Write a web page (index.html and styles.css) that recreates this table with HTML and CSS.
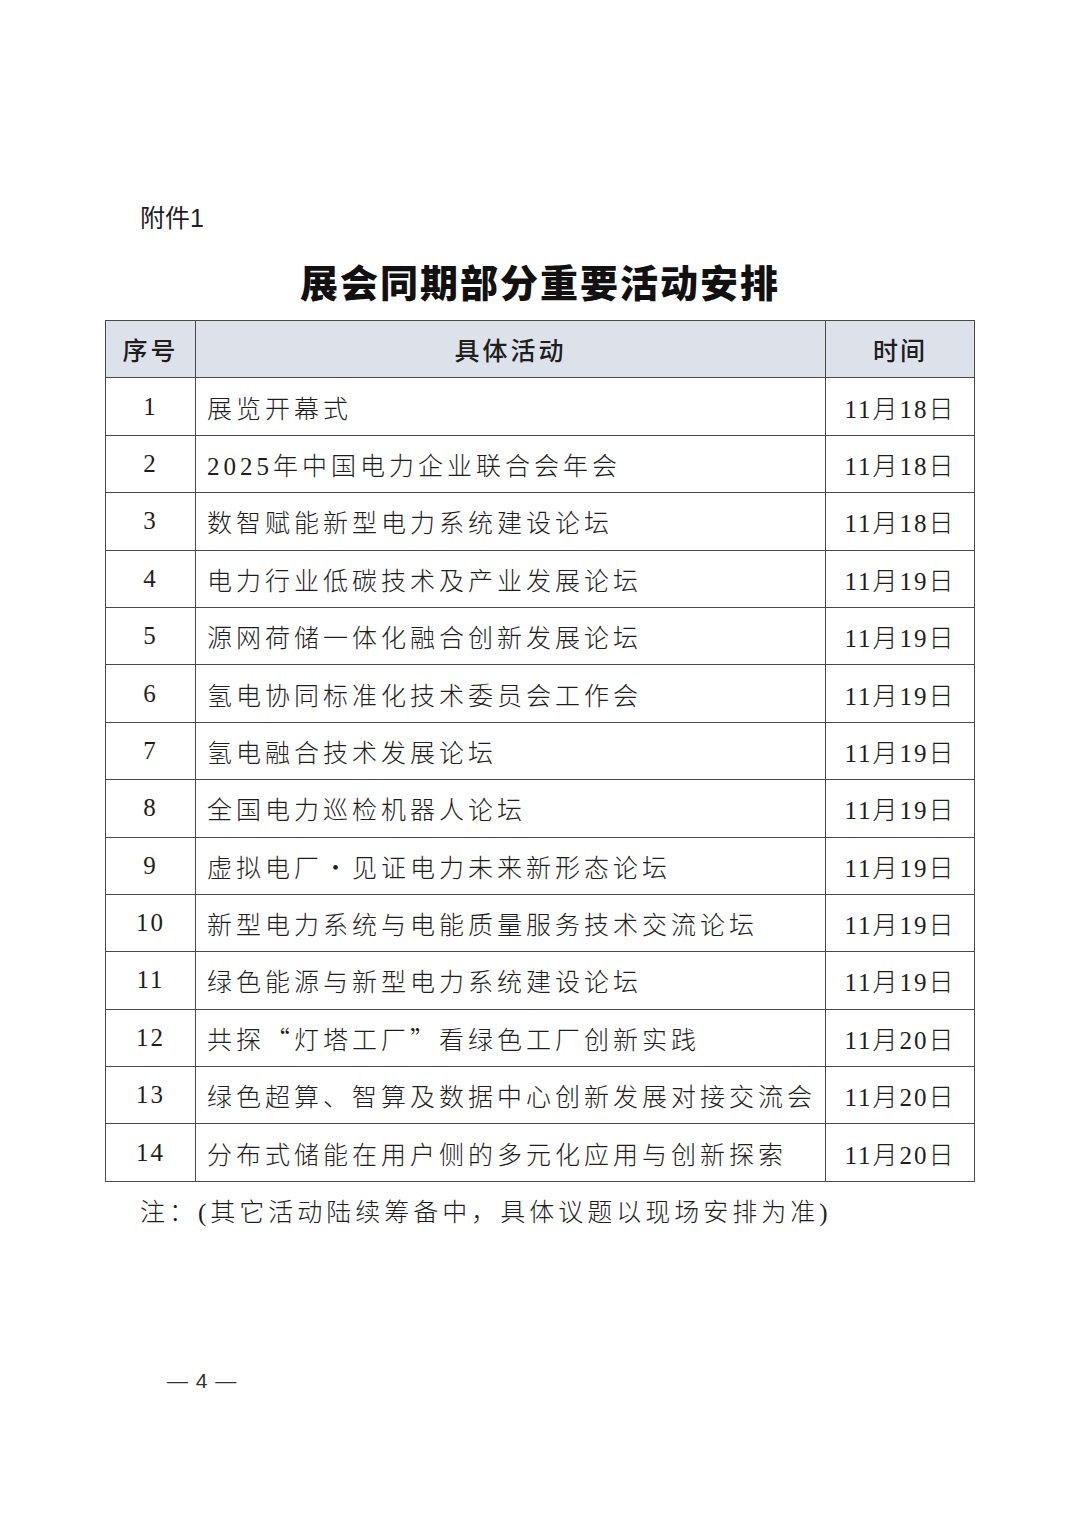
FILE: index.html
```html
<!DOCTYPE html>
<html lang="zh-CN">
<head>
<meta charset="utf-8">
<link rel="stylesheet" href="styles.css">
</head>
<body>
<div class="page">
  <div class="attach">附件1</div>
  <h1 class="title">展会同期部分重要活动安排</h1>
  <table class="sched">
    <thead>
      <tr><th class="c-no">序号</th><th class="c-act">具体活动</th><th class="c-time">时间</th></tr>
    </thead>
    <tbody>
      <tr><td class="c-no">1</td><td class="c-act">展览开幕式</td><td class="c-time">11月18日</td></tr>
      <tr><td class="c-no">2</td><td class="c-act">2025年中国电力企业联合会年会</td><td class="c-time">11月18日</td></tr>
      <tr><td class="c-no">3</td><td class="c-act">数智赋能新型电力系统建设论坛</td><td class="c-time">11月18日</td></tr>
      <tr><td class="c-no">4</td><td class="c-act">电力行业低碳技术及产业发展论坛</td><td class="c-time">11月19日</td></tr>
      <tr><td class="c-no">5</td><td class="c-act">源网荷储一体化融合创新发展论坛</td><td class="c-time">11月19日</td></tr>
      <tr><td class="c-no">6</td><td class="c-act">氢电协同标准化技术委员会工作会</td><td class="c-time">11月19日</td></tr>
      <tr><td class="c-no">7</td><td class="c-act">氢电融合技术发展论坛</td><td class="c-time">11月19日</td></tr>
      <tr><td class="c-no">8</td><td class="c-act">全国电力巡检机器人论坛</td><td class="c-time">11月19日</td></tr>
      <tr><td class="c-no">9</td><td class="c-act">虚拟电厂<span class="fw">·</span>见证电力未来新形态论坛</td><td class="c-time">11月19日</td></tr>
      <tr><td class="c-no">10</td><td class="c-act">新型电力系统与电能质量服务技术交流论坛</td><td class="c-time">11月19日</td></tr>
      <tr><td class="c-no">11</td><td class="c-act">绿色能源与新型电力系统建设论坛</td><td class="c-time">11月19日</td></tr>
      <tr><td class="c-no">12</td><td class="c-act">共探<span class="fw">“</span>灯塔工厂<span class="fw">”</span>看绿色工厂创新实践</td><td class="c-time">11月20日</td></tr>
      <tr><td class="c-no">13</td><td class="c-act">绿色超算、智算及数据中心创新发展对接交流会</td><td class="c-time">11月20日</td></tr>
      <tr><td class="c-no">14</td><td class="c-act">分布式储能在用户侧的多元化应用与创新探索</td><td class="c-time">11月20日</td></tr>
    </tbody>
  </table>
  <p class="note">注：(其它活动陆续筹备中，具体议题以现场安排为准)</p>
  <div class="pageno">— 4 —</div>
</div>
</body>
</html>
```

FILE: styles.css
```css
html, body {
  margin: 0;
  padding: 0;
  background: #ffffff;
}
.page {
  width: 1080px;
  height: 1527px;
  padding-top: 200px;
  box-sizing: border-box;
  color: #1e1e1e;
  font-family: "Liberation Serif", "Noto Sans CJK SC", serif;
}
.attach {
  margin-left: 140px;
  font-family: "Liberation Sans", "Noto Sans CJK SC", sans-serif;
  font-size: 25px;
  line-height: 36px;
  height: 36px;
}
.title {
  margin: 20px 0 0 0;
  text-align: center;
  font-family: "Noto Sans CJK SC", sans-serif;
  font-weight: 900;
  font-size: 38px;
  letter-spacing: 2px;
  line-height: 50px;
  height: 50px;
  color: #111;
}
.sched {
  margin: 14px 0 0 105px;
  width: 870px;
  border-collapse: collapse;
  table-layout: fixed;
}
.sched th, .sched td {
  border: 1.5px solid #4a4a4a;
  padding: 0;
  height: 56.4px;
  vertical-align: middle;
  font-size: 25px;
  font-weight: 300;
  color: #1e1e1e;
}
.sched th {
  background: #dde2ea;
  font-family: "Noto Sans CJK SC", sans-serif;
  font-weight: 500;
  letter-spacing: 3px;
  text-align: center;
}
.sched .c-no { width: 89px; text-align: center; }
.sched .c-time { width: 148px; text-align: center; letter-spacing: 2px; }
.sched td.c-act {
  padding-left: 11px;
  letter-spacing: 4px;
  white-space: nowrap;
}
.sched td.c-no, .sched td.c-time {
  letter-spacing: 2px;
}
.fw {
  font-family: "Noto Sans CJK SC", sans-serif;
  display: inline-block;
  width: 25px;
  text-align: center;
  margin-right: 4px;
}
.note {
  margin: 13px 0 0 140px;
  font-size: 25px;
  font-weight: 300;
  letter-spacing: 4px;
  line-height: 36px;
}
.pageno {
  margin: 135px 0 0 167px;
  font-size: 21px;
  line-height: 30px;
  word-spacing: 2px;
  font-family: "Liberation Sans", sans-serif;
  color: #333;
}
```
